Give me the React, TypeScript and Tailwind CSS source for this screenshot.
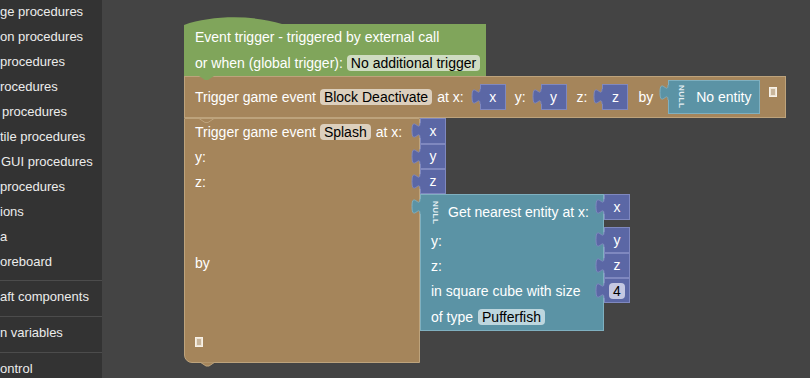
import React from "react";

const font = "font-['Liberation_Sans',Arial,sans-serif]";

const menu = [
  { t: "ge procedures", ml: "ml-0" },
  { t: "on procedures", ml: "ml-0" },
  { t: "procedures", ml: "ml-0" },
  { t: "rocedures", ml: "ml-0" },
  { t: "procedures", ml: "ml-[2px]" },
  { t: "tile procedures", ml: "ml-0" },
  { t: "GUI procedures", ml: "ml-[1px]" },
  { t: "procedures", ml: "ml-0" },
  { t: "ions", ml: "ml-0" },
  { t: "a", ml: "ml-0" },
  { t: "oreboard", ml: "ml-0" },
];

const sections = ["aft components", "n variables", "ontrol"];

function OutTab({ fill, stroke }: { fill: string; stroke: string }) {
  return (
    <svg className="absolute left-[-10px] top-[-1px]" width="10" height="24" viewBox="0 0 10 24">
      <path d="M10,5 L9,5 C9,15 1,-3 1,12.5 S9,10 9,20 L10,20 Z" fill={fill} />
      <path d="M9,5 C9,15 1,-3 1,12.5 S9,10 9,20" fill="none" stroke={stroke} strokeWidth="1" />
    </svg>
  );
}

function Num({ label, h, field }: { label: string; h: string; field?: boolean }) {
  return (
    <div className={`relative w-[26px] ${h} bg-[#5b67a5] border border-[#7f88bf] flex items-center justify-center text-white text-[14px]`}>
      <OutTab fill="#5b67a5" stroke="#7f88bf" />
      {field ? (
        <span className="h-[16px] px-[4px] rounded-[4px] bg-[#c4c8e2] text-black leading-[16px]">{label}</span>
      ) : (
        label
      )}
    </div>
  );
}

function Null() {
  return (
    <span className="[writing-mode:vertical-rl] text-[8px] font-bold leading-none text-[#e4eef2] tracking-[0.5px]">NULL</span>
  );
}

function Note() {
  return (
    <svg width="8" height="10" viewBox="0 0 8 10">
      <rect x="0.5" y="0.5" width="7" height="9" fill="#eee4d4" stroke="#f7f1e8" />
      <path d="M2,3 H6 M2,5 H6 M2,7 H6" stroke="#a28662" strokeWidth="1" />
    </svg>
  );
}

function Field({ children, bg }: { children: React.ReactNode; bg: string }) {
  return (
    <span className={`h-[16px] px-[4px] rounded-[4px] ${bg} text-black leading-[16px]`}>{children}</span>
  );
}

export default function App() {
  return (
    <div className={`flex w-[810px] h-[378px] overflow-hidden bg-[#444444] ${font}`}>
      {/* toolbox */}
      <div className="w-[102px] shrink-0 bg-[#333333] text-[13px] text-[#ececec] overflow-hidden whitespace-nowrap">
        <div className="mt-[-1px]">
          {menu.map((m, i) => (
            <div key={i} className={`h-[25px] leading-[25px] ${m.ml}`}>
              {m.t}
            </div>
          ))}
        </div>
        <div className="mt-[6px]">
          {sections.map((s) => (
            <div key={s} className="h-[36px] border-t border-[#4c4c4c] flex items-center pb-[3px]">
              {s}
            </div>
          ))}
        </div>
      </div>

      {/* workspace */}
      <div className="relative flex-1 text-[14px] text-white whitespace-nowrap">
        <div className="absolute left-[82px] top-[16px] flex flex-col items-start">
          {/* event trigger hat block */}
          <div className="relative z-10 w-[302px]">
            <svg className="block" width="302" height="9" viewBox="0 0 302 9">
              <path d="M0,9 C28,-1 70,-1 98,8 L302,8 L302,9 Z" fill="#80a55b" />
            </svg>
            <div className="h-[51px] bg-[#80a55b] pl-[11px]">
              <div className="h-[25px] flex items-center">Event trigger - triggered by external call</div>
              <div className="h-[26px] flex items-center">
                or when (global trigger):
                <span className="ml-[4px]">
                  <Field bg="bg-[#cfdcc2]">No additional trigger</Field>
                </span>
              </div>
            </div>
            <svg className="absolute left-[15px] bottom-[-4px]" width="15" height="4" viewBox="0 0 15 4">
              <path d="M0,0 L6,4 L9,4 L15,0 Z" fill="#80a55b" />
            </svg>
          </div>

          {/* trigger game event 1 */}
          <div className="w-[602px] h-[42px] bg-[#a5855b] border border-[#bda37c] flex items-center pl-[10px]">
            <span>Trigger game event</span>
            <span className="ml-[4px]">
              <Field bg="bg-[#dccfbd]">Block Deactivate</Field>
            </span>
            <span className="ml-[5px]">at x:</span>
            <div className="ml-[16px]">
              <Num label="x" h="h-[26px]" />
            </div>
            <span className="ml-[9px]">y:</span>
            <div className="ml-[15px]">
              <Num label="y" h="h-[26px]" />
            </div>
            <span className="ml-[10px]">z:</span>
            <div className="ml-[15px]">
              <Num label="z" h="h-[26px]" />
            </div>
            <span className="ml-[10px]">by</span>
            <div className="relative ml-[15px] w-[92px] h-[34px] bg-[#5b93a5] border border-[#7fb0c0] flex items-center pl-[8px]">
              <OutTab fill="#5b93a5" stroke="#7fb0c0" />
              <Null />
              <span className="ml-[11px]">No entity</span>
            </div>
            <div className="ml-[9px] mt-[-10px]">
              <Note />
            </div>
          </div>

          {/* trigger game event 2 */}
          <div className="relative flex">
            <svg className="absolute left-[15px] top-0 z-10" width="15" height="5" viewBox="0 0 15 5">
              <path d="M0,0.5 L6,4.5 L9,4.5 L15,0.5" fill="none" stroke="#bda37c" strokeWidth="1" />
            </svg>
            <div className="relative w-[236px] h-[245px] bg-[#a5855b] border border-[#bda37c] rounded-bl-[8px] pl-[10px]">
              <div className="h-[26px] flex items-center">
                <span>Trigger game event</span>
                <span className="ml-[4px]">
                  <Field bg="bg-[#dccfbd]">Splash</Field>
                </span>
                <span className="ml-[5px]">at x:</span>
              </div>
              <div className="h-[25px] flex items-center">y:</div>
              <div className="h-[25px] flex items-center">z:</div>
              <div className="h-[137px] flex items-center">by</div>
              <div className="h-[30px] pt-[5px]">
                <Note />
              </div>
              <svg className="absolute left-[15px] bottom-[-5px]" width="15" height="5" viewBox="0 0 15 5">
                <path d="M0,0 L6,4 L9,4 L15,0 Z" fill="#a5855b" stroke="#bda37c" strokeWidth="1" />
              </svg>
            </div>

            <div className="flex flex-col items-start">
              <Num label="x" h="h-[26px]" />
              <Num label="y" h="h-[25px]" />
              <Num label="z" h="h-[25px]" />

              {/* get nearest entity */}
              <div className="relative flex">
                <div className="relative w-[184px] h-[137px] bg-[#5b93a5] border border-[#7fb0c0] pl-[10px]">
                  <OutTab fill="#5b93a5" stroke="#7fb0c0" />
                  <div className="h-[33px] flex items-center pt-[2px]">
                    <Null />
                    <span className="ml-[9px]">Get nearest entity at x:</span>
                  </div>
                  <div className="h-[26px] flex items-center">y:</div>
                  <div className="h-[25px] flex items-center">z:</div>
                  <div className="h-[25px] flex items-center">in square cube with size</div>
                  <div className="h-[27px] flex items-center">
                    <span>of type</span>
                    <span className="ml-[5px]">
                      <Field bg="bg-[#bdd6de]">Pufferfish</Field>
                    </span>
                  </div>
                </div>
                <div className="flex flex-col items-start">
                  <Num label="x" h="h-[26px]" />
                  <div className="h-[7px]" />
                  <Num label="y" h="h-[26px]" />
                  <Num label="z" h="h-[25px]" />
                  <Num label="4" h="h-[25px]" field />
                </div>
              </div>
            </div>
          </div>
        </div>
      </div>
    </div>
  );
}
